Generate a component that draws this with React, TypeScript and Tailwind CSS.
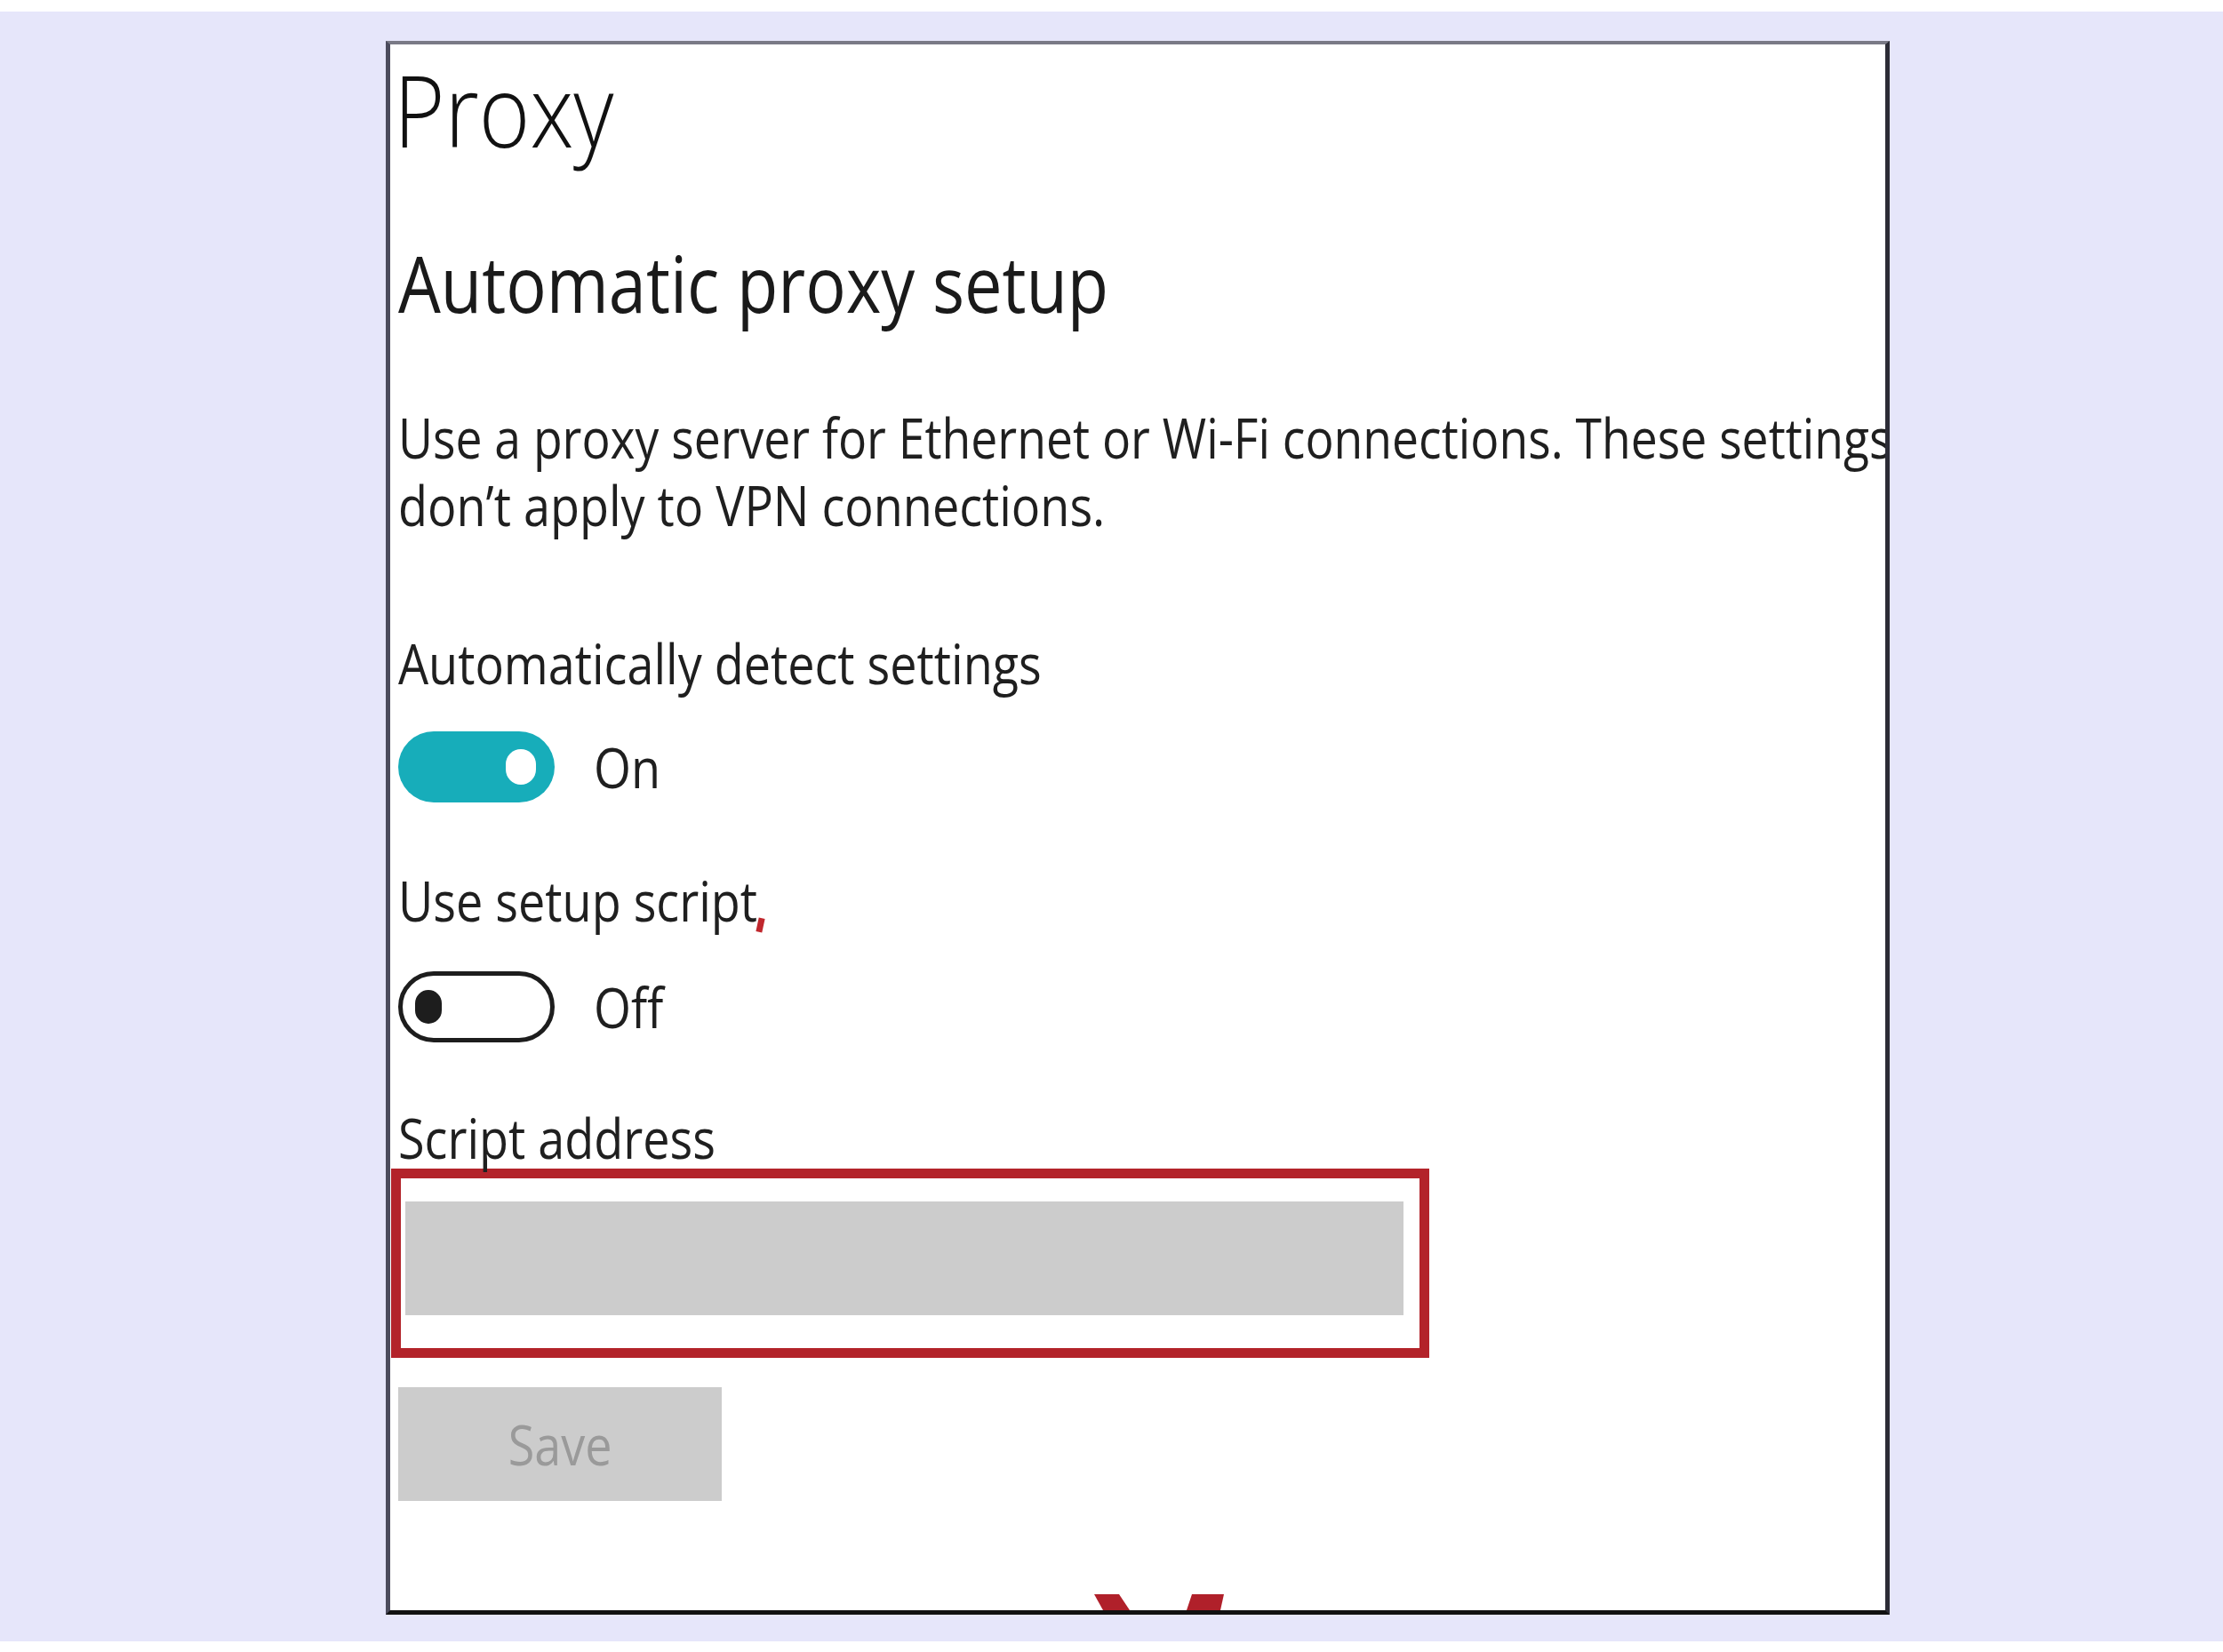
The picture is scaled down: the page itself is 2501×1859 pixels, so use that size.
const sans = "font-['Open_Sans','Noto_Sans',sans-serif]";

function Squeeze({ children, className = "" }: { children: React.ReactNode; className?: string }) {
  return (
    <span className={`inline-block origin-left scale-x-[0.87] whitespace-nowrap ${className}`}>
      {children}
    </span>
  );
}

function Toggle({ on }: { on: boolean }) {
  if (on) {
    return (
      <div className="flex h-[80px] w-[176px] items-center justify-end rounded-full bg-[#17adba] pr-[21px]">
        <div className="h-[40px] w-[34px] rounded-full bg-white" />
      </div>
    );
  }
  return (
    <div className="flex h-[80px] w-[176px] items-center rounded-full border-[5px] border-[#1d1d1d] pl-[14px]">
      <div className="h-[38px] w-[30px] rounded-full bg-[#1d1d1d]" />
    </div>
  );
}

function ToggleRow({ on, label }: { on: boolean; label: string }) {
  return (
    <div className="flex items-center gap-[44px]">
      <Toggle on={on} />
      <Squeeze className="text-[62px] leading-[76px] text-[#1f1f1f]">{label}</Squeeze>
    </div>
  );
}

export default function App() {
  return (
    <div className={`flex h-[1859px] w-[2501px] flex-col bg-white ${sans}`}>
      <div className="h-[13px]" />
      <div className="h-[1834px] bg-[#e6e6fa] pt-[33px] pl-[434px]">
        <div className="relative h-[1771px] w-[1692px] overflow-hidden border-t-[4px] border-r-[5px] border-b-[5px] border-l-[5px] border-t-[#7a7a86] border-r-[#2c2c36] border-b-[#111111] border-l-[#4b4b5c] bg-white pl-[9px]">
          <h1 className="mt-[16px] -ml-[5px] text-[113px] leading-[113px] font-light text-[#111111]">
            <Squeeze className="scale-x-[0.9]">Proxy</Squeeze>
          </h1>

          <h2 className="mt-[96px] text-[87px] leading-[87px] text-[#1a1a1a]">
            <Squeeze>Automatic proxy setup</Squeeze>
          </h2>

          <p className="mt-[92px] text-[62px] leading-[76px] text-[#1f1f1f]">
            <Squeeze className="scale-x-[0.862]">Use a proxy server for Ethernet or Wi-Fi connections. These settings</Squeeze>
            <br />
            <Squeeze>don’t apply to VPN connections.</Squeeze>
          </p>

          <div className="mt-[102px] text-[62px] leading-[76px] text-[#1f1f1f]">
            <Squeeze>Automatically detect settings</Squeeze>
          </div>

          <div className="mt-[39px]">
            <ToggleRow on label="On" />
          </div>

          <div className="mt-[72px] flex items-end text-[62px] leading-[76px] text-[#1f1f1f]">
            <Squeeze>Use setup script</Squeeze>
            <span className="-ml-[60px] mb-[2px] inline-block h-[16px] w-[7px] rotate-12 bg-[#c0272d]" />
          </div>

          <div className="mt-[42px]">
            <ToggleRow on={false} label="Off" />
          </div>

          <div className="mt-[72px] text-[62px] leading-[70px] text-[#1f1f1f]">
            <Squeeze className="scale-x-[0.86]">Script address</Squeeze>
          </div>

          <div className="-ml-[8px] h-[213px] w-[1168px] border-[11px] border-[#b3232a] pt-[26px] pl-[5px]">
            <div className="h-[128px] w-[1123px] bg-[#cccccc]" />
          </div>

          <button className="mt-[33px] flex h-[128px] w-[364px] items-center justify-center bg-[#cccccc] text-[62px] leading-[76px] text-[#9a9a9a]">
            <span className="inline-block scale-x-[0.87]">Save</span>
          </button>

          <svg className="absolute bottom-0 left-[790px] h-[20px] w-[160px]" viewBox="0 0 160 20">
            <polygon points="2,2 30,2 42,20 12,20" fill="#b0202a" />
            <polygon points="112,2 148,2 144,20 106,20" fill="#b0202a" />
          </svg>
        </div>
      </div>
    </div>
  );
}
